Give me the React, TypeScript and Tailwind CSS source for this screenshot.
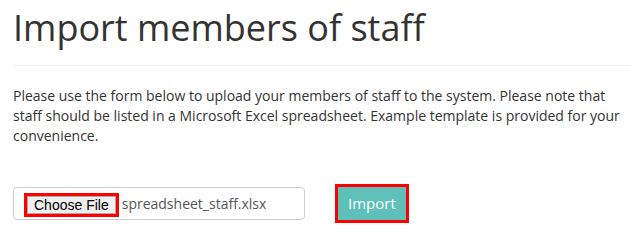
export default function App() {
  return (
    <div className="min-h-[238px] bg-white pl-[13px] font-['Open_Sans',sans-serif] text-[#333]">
      <h1 className="pt-[4px] text-[36px] font-normal leading-[48px]">Import members of staff</h1>
      <hr className="mt-[13px] border-t border-[#eee]" />
      <p className="mt-[20px] pr-[10px] text-[14px] leading-[20px]">
        Please use the form below to upload your members of staff to the system. Please note that staff should be
        listed in a Microsoft Excel spreadsheet. Example template is provided for your convenience.
      </p>
      <div className="mt-[38px] flex items-center">
        <div className="flex h-[33px] w-[292px] items-center rounded-[4px] border border-[#ccc] pl-[10px]">
          <span className="mt-[2px] border-[3px] border-[#f00]">
            <span className="block border border-[#aaa] bg-[#efefef] px-[6px] font-['Liberation_Sans',sans-serif] text-[14px] leading-[16px] text-black">
              Choose File
            </span>
          </span>
          <span className="ml-[3px] text-[14px] text-[#555]">spreadsheet_staff.xlsx</span>
        </div>
        <div className="ml-[30px] border-[3px] border-[#f00]">
          <button className="block h-[33px] bg-[#5dc1ba] px-[10px] text-[15px] text-white">Import</button>
        </div>
      </div>
    </div>
  );
}
